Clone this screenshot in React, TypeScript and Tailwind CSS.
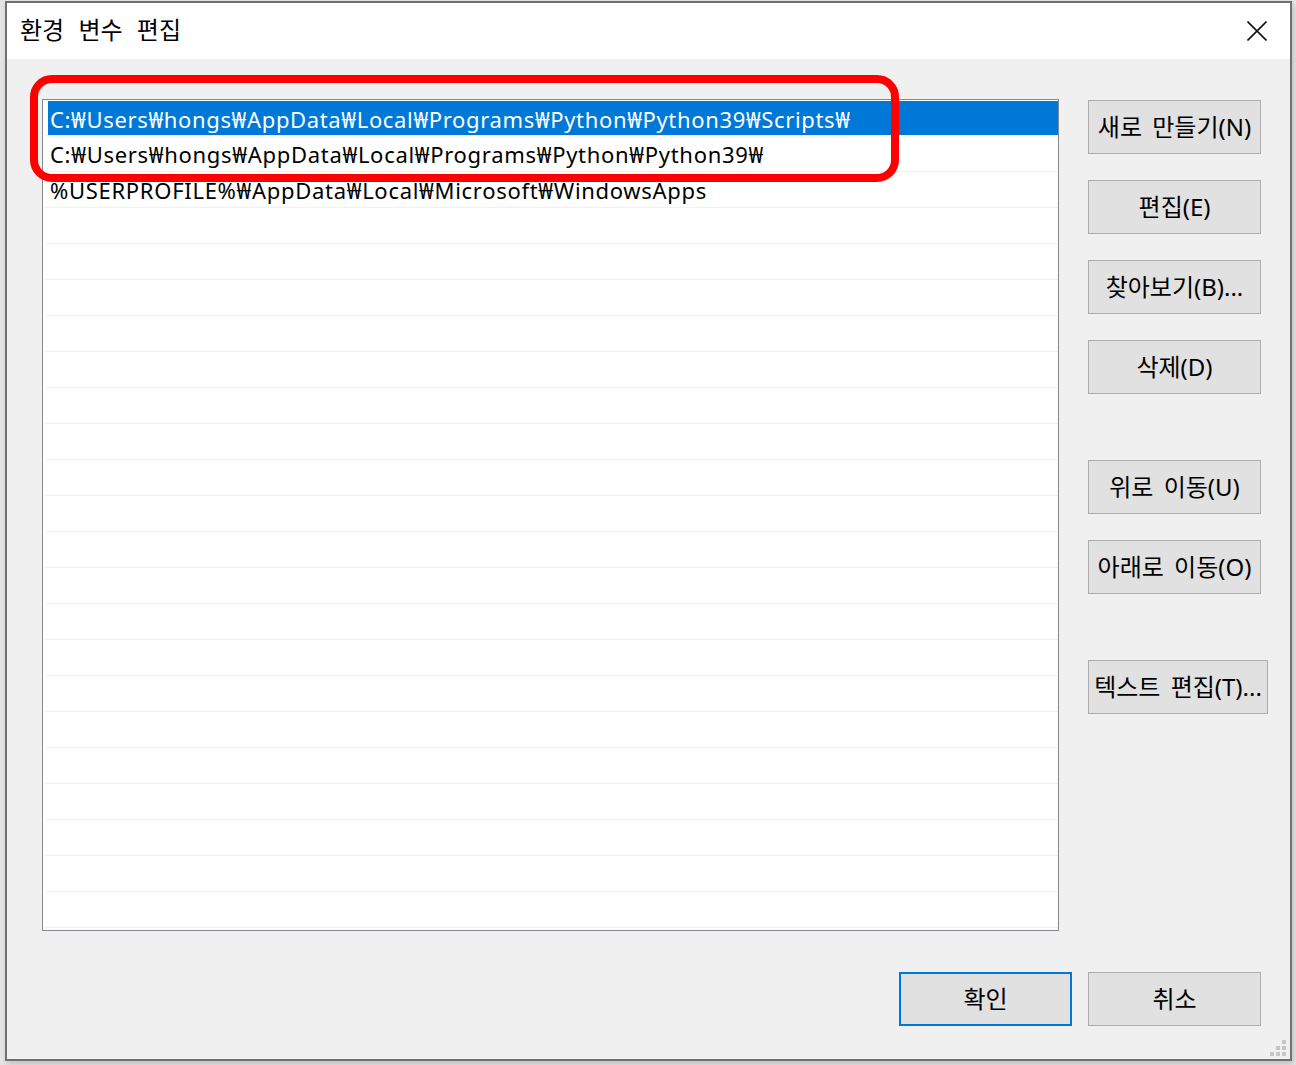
import React from "react";

const FONT = { fontFamily: '"Noto Sans", "Noto Sans CJK KR", sans-serif' };

const rows = [
  "C:₩Users₩hongs₩AppData₩Local₩Programs₩Python₩Python39₩Scripts₩",
  "C:₩Users₩hongs₩AppData₩Local₩Programs₩Python₩Python39₩",
  "%USERPROFILE%₩AppData₩Local₩Microsoft₩WindowsApps",
];

function Btn({
  label,
  className = "",
  primary = false,
}: {
  label: string;
  className?: string;
  primary?: boolean;
}) {
  return (
    <div
      className={
        (primary ? "border-2 border-[#0078d7] " : "border border-[#adadad] ") +
        "h-[54px] bg-[#e1e1e1] flex items-center justify-center text-[24px] text-black whitespace-nowrap [word-spacing:4px] " +
        className
      }
    >
      {label}
    </div>
  );
}

export default function App() {
  const list = Array.from({ length: 23 }, (_, i) => rows[i] ?? "");
  return (
    <div className="relative w-[1296px] h-[1065px] bg-[#e4e4e4] overflow-hidden pl-[5px] pt-[1px]" style={FONT}>
      <div className="relative w-[1287px] h-[1060px] border-2 border-[#707070] bg-[#f0f0f0] flex flex-col shadow-[2px_3px_6px_rgba(0,0,0,0.15)]">
        {/* title bar */}
        <div className="h-[56px] bg-white flex items-center justify-between pl-[13px] pr-[23px] shrink-0">
          <span className="text-[24px] leading-[30px] text-black [word-spacing:8px] -mt-[2px]">환경 변수 편집</span>
          <svg width="20" height="20" viewBox="0 0 20 20">
            <path d="M0.5 0.5 L19.5 19.5 M19.5 0.5 L0.5 19.5" stroke="#111" strokeWidth="1.6" fill="none" />
          </svg>
        </div>
        {/* body */}
        <div className="flex-1 flex flex-col pt-[40px] pl-[35px] pr-[29px]">
          <div className="flex gap-[29px]">
            <div className="w-[1017px] h-[832px] border border-[#828790] bg-white pl-[2px] overflow-hidden">
              {list.map((t, i) => (
                <div key={i} className="h-[36px] border-b border-[#f0f0f0] flex">
                  {i === 0 ? (
                    <div className="ml-[3px] mt-[1px] h-[34px] flex-1 bg-[#0078d7] text-white text-[22px] leading-[37px] tracking-[0.65px] pl-[2px] whitespace-nowrap">
                      {t}
                    </div>
                  ) : (
                    <div className="ml-[3px] h-[35px] flex-1 text-black text-[22px] leading-[37px] tracking-[0.7px] pl-[2px] whitespace-nowrap">
                      {t}
                    </div>
                  )}
                </div>
              ))}
            </div>
            <div className="pt-[1px] flex flex-col items-start w-[173px]">
              <Btn label="새로 만들기(N)" className="w-[173px]" />
              <Btn label="편집(E)" className="w-[173px] mt-[26px]" />
              <Btn label="찾아보기(B)..." className="w-[173px] mt-[26px]" />
              <Btn label="삭제(D)" className="w-[173px] mt-[26px]" />
              <Btn label="위로 이동(U)" className="w-[173px] mt-[66px]" />
              <Btn label="아래로 이동(O)" className="w-[173px] mt-[26px]" />
              <Btn label="텍스트 편집(T)..." className="w-[180px] mt-[66px]" />
            </div>
          </div>
          <div className="mt-[41px] flex justify-end gap-[16px]">
            <Btn label="확인" primary className="w-[173px]" />
            <Btn label="취소" className="w-[173px]" />
          </div>
        </div>
        {/* resize grip */}
        <svg className="absolute right-[4px] bottom-[3px]" width="16" height="16" viewBox="0 0 16 16">
          <rect x="12" y="0" width="4" height="4" fill="#c6c6c6" />
          <rect x="6" y="6" width="4" height="4" fill="#c6c6c6" />
          <rect x="12" y="6" width="4" height="4" fill="#c6c6c6" />
          <rect x="0" y="12" width="4" height="4" fill="#c6c6c6" />
          <rect x="6" y="12" width="4" height="4" fill="#c6c6c6" />
          <rect x="12" y="12" width="4" height="4" fill="#c6c6c6" />
        </svg>
      </div>
      {/* red highlight */}
      <div className="absolute left-[30px] top-[75px] w-[869px] h-[107px] border-[8px] border-[#ff0000] rounded-[22px] pointer-events-none" />
    </div>
  );
}
